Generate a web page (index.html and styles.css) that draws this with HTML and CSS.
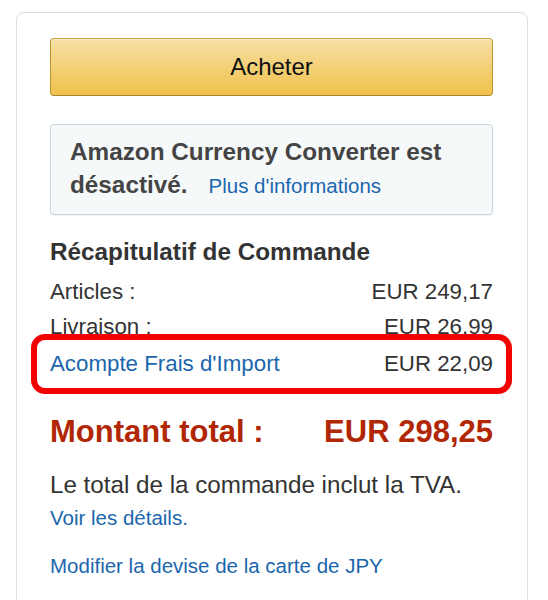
FILE: index.html
```html
<!DOCTYPE html>
<html lang="fr">
<head>
<meta charset="utf-8">
<title>Récapitulatif de Commande</title>
<link rel="stylesheet" href="styles.css">
</head>
<body>
<div class="card">
  <button class="buy">Acheter</button>
  <div class="alert">
    <p class="alert-title">Amazon Currency Converter est désactivé.<a class="link alert-link" href="#">Plus d'informations</a></p>
  </div>
  <h2 class="summary-title">Récapitulatif de Commande</h2>
  <div class="row row-first"><span>Articles :</span><span>EUR 249,17</span></div>
  <div class="row"><span>Livraison :</span><span>EUR 26,99</span></div>
  <div class="row row-highlight"><a class="link" href="#">Acompte Frais d'Import</a><span>EUR 22,09</span></div>
  <div class="total"><span>Montant total :</span><span>EUR 298,25</span></div>
  <p class="vat">Le total de la commande inclut la TVA.</p>
  <a class="link details" href="#">Voir les détails.</a>
  <a class="link currency" href="#">Modifier la devise de la carte de JPY</a>
</div>
</body>
</html>
```
FILE: styles.css
```css
html, body {
  margin: 0;
  padding: 0;
  background: #fff;
}
body {
  font-family: "Liberation Sans", Arial, sans-serif;
  color: #333;
}
.card {
  margin: 12px 20px 0 16px;
  border: 1px solid #ddd;
  border-radius: 8px;
  padding: 25px 34px 60px 33px;
}
.buy {
  display: block;
  width: 100%;
  height: 58px;
  margin: 0;
  padding: 0;
  border: 1px solid;
  border-color: #c9a444 #b8942e #a88734;
  border-radius: 4px;
  background: linear-gradient(to bottom, #f7dfa5, #f0c14b);
  font-family: inherit;
  font-size: 24px;
  color: #111;
  box-shadow: inset 0 1px 0 rgba(255,255,255,0.4);
}
.alert {
  margin-top: 28px;
  border: 1px solid #c5d6df;
  border-radius: 4px;
  background: #f6f9fa;
  padding: 10px 20px 12px 19px;
  box-shadow: 0 1px 1px rgba(0,0,0,0.05);
}
.alert-title {
  margin: 0;
  line-height: 33px;
  font-size: 24.3px;
  font-weight: bold;
  color: #444;
}
.alert-link {
  margin-left: 21px;
  font-size: 20.5px;
  font-weight: normal;
}
.link {
  color: #1a66ad;
  text-decoration: none;
}
.summary-title {
  margin: 22px 0 0;
  font-size: 24.3px;
  line-height: 30px;
  font-weight: bold;
  color: #333;
}
.row {
  display: flex;
  justify-content: space-between;
  font-size: 22.3px;
  line-height: 35px;
  color: #333;
}
.row-first {
  margin-top: 7px;
}
.row-highlight {
  margin-top: 2px;
  position: relative;
  z-index: 0;
}
.row-highlight::before {
  content: "";
  position: absolute;
  left: -19px;
  right: -19px;
  top: -12px;
  bottom: -13px;
  border: 6px solid #f50000;
  border-radius: 14px;
  background: #fff;
  z-index: -1;
}
.total {
  display: flex;
  justify-content: space-between;
  margin-top: 31px;
  font-size: 31px;
  line-height: 40px;
  font-weight: bold;
  color: #b12704;
}
.vat {
  margin: 17px 0 0;
  font-size: 24.2px;
  line-height: 32px;
  color: #333;
}
.details {
  display: block;
  margin-top: 2px;
  font-size: 20.5px;
  line-height: 30px;
}
.currency {
  display: block;
  margin-top: 18px;
  font-size: 20.5px;
  line-height: 30px;
}
```
